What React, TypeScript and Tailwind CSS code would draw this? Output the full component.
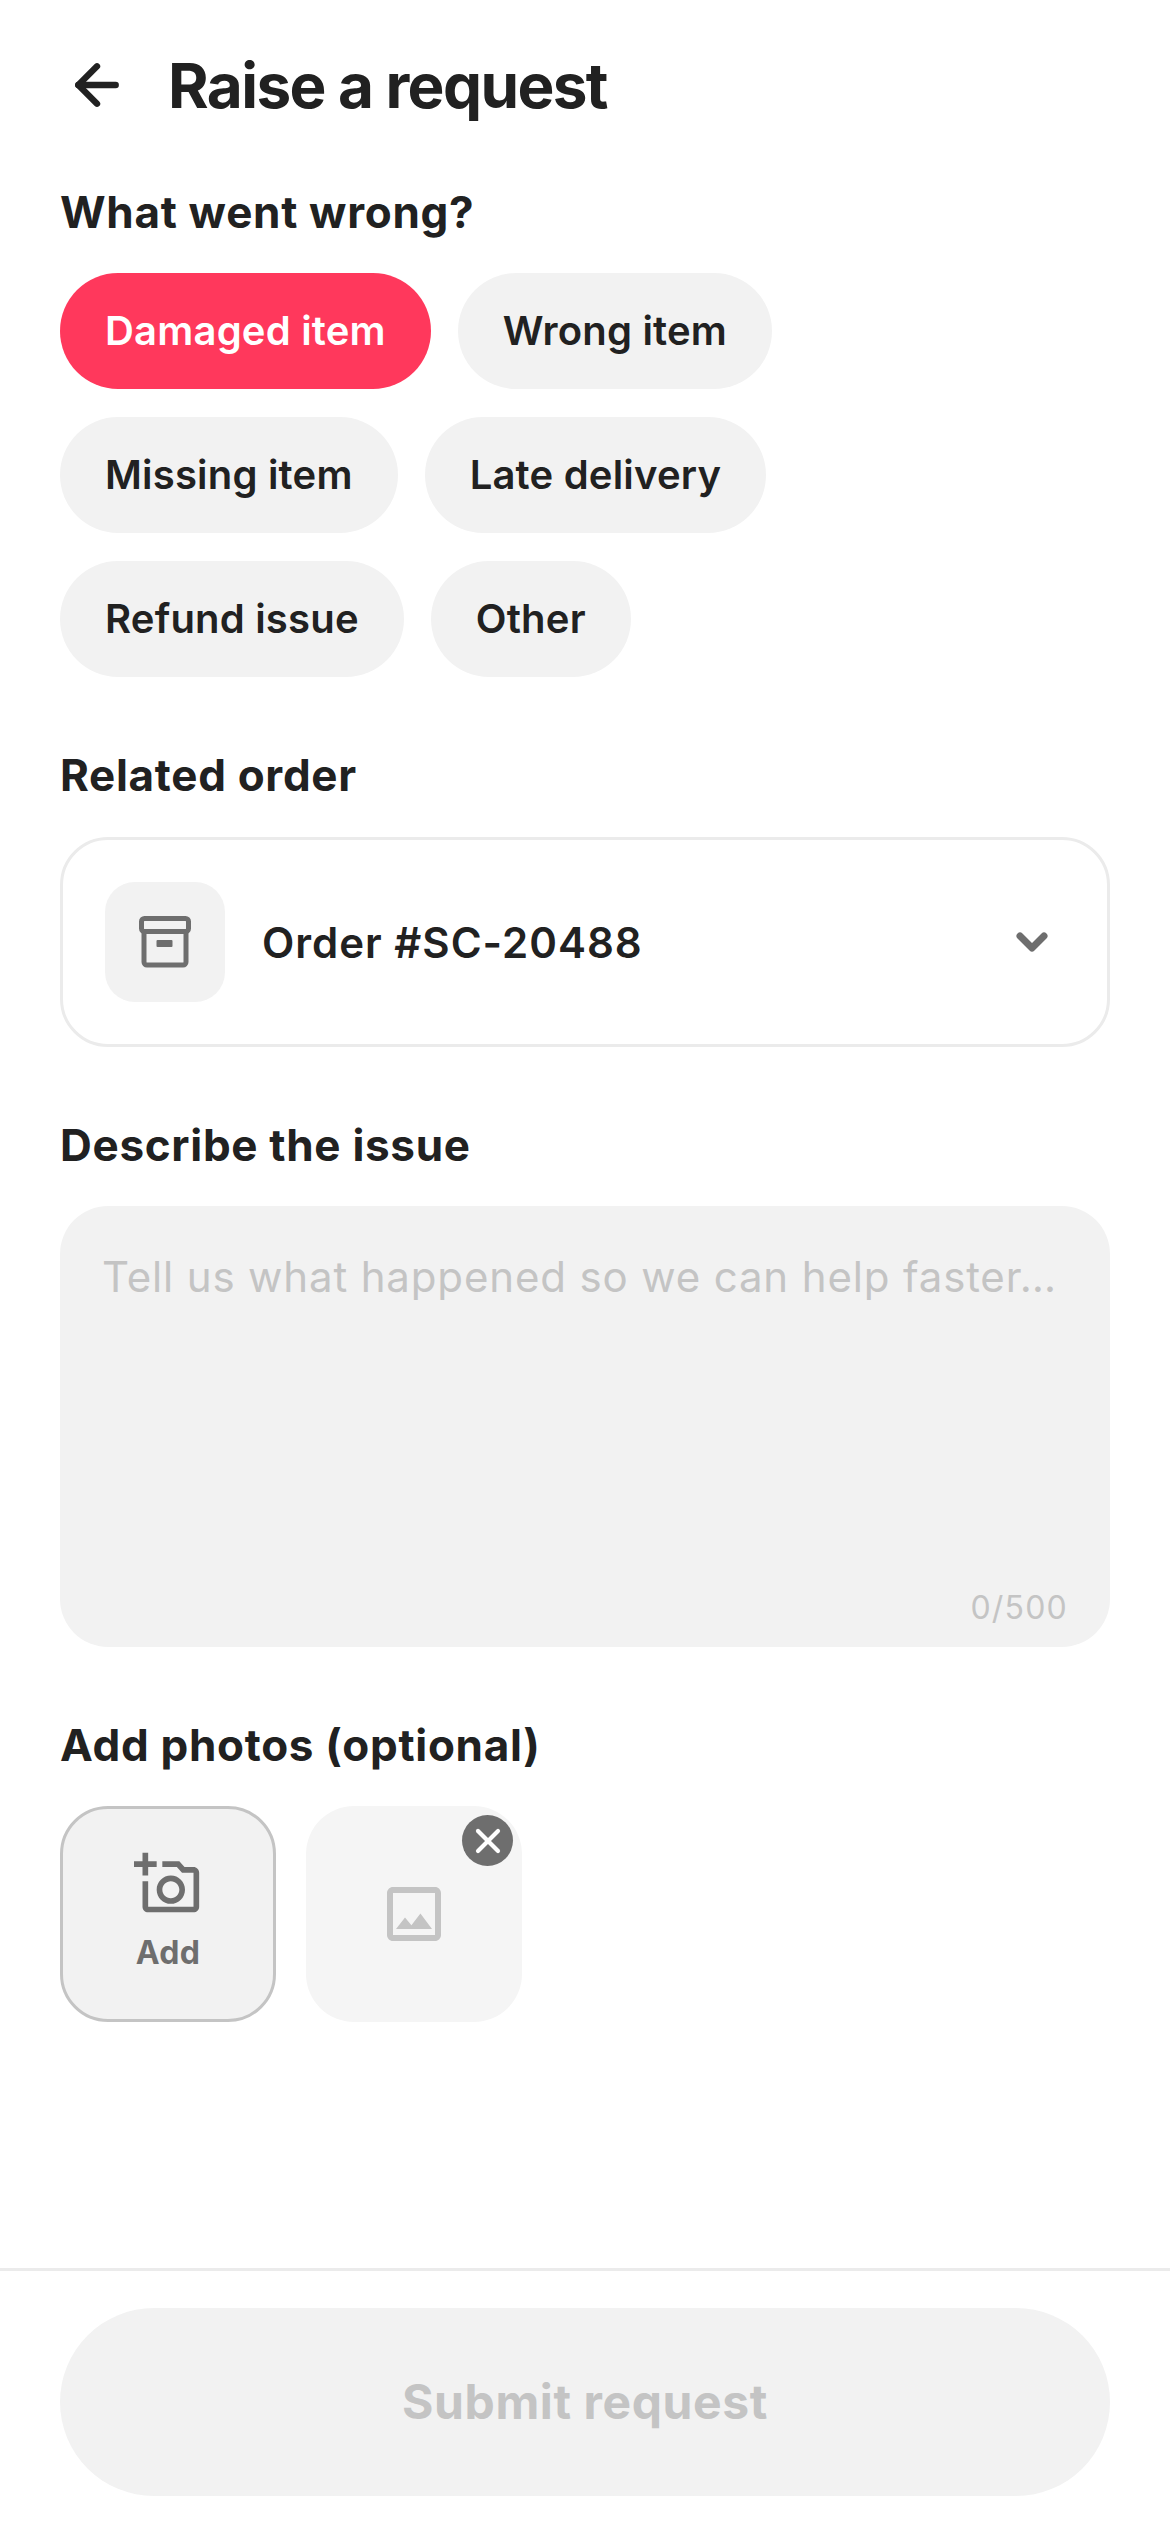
import { ArrowLeft, X } from "lucide-react";
import { MdOutlineAddAPhoto, MdOutlineImage } from "react-icons/md";

const rows = [
  ["Damaged item", "Wrong item"],
  ["Missing item", "Late delivery"],
  ["Refund issue", "Other"],
];

function Label({ children }: { children: string }) {
  return <div className="text-[44px] leading-[56px] font-bold text-[#212121] tracking-[0.7px]">{children}</div>;
}

function ArchiveIcon() {
  return (
    <svg width="52" height="52" viewBox="0 0 52 52" fill="none">
      <rect x="2.5" y="2.5" width="47" height="13" rx="3" stroke="#6e6e6e" strokeWidth="5" />
      <path d="M5 15v31a3 3 0 0 0 3 3h36a3 3 0 0 0 3-3V15" stroke="#6e6e6e" strokeWidth="5" />
      <rect x="17.5" y="24" width="16" height="7" rx="1" fill="#6e6e6e" />
    </svg>
  );
}

function ChevronIcon() {
  return (
    <svg width="32" height="20" viewBox="0 0 32 20" fill="none">
      <path d="M4 4l12 12L28 4" stroke="#6e6e6e" strokeWidth="7" strokeLinecap="round" strokeLinejoin="round" />
    </svg>
  );
}

export default function App() {
  return (
    <div className="h-[2532px] w-[1170px] bg-white flex flex-col font-['Inter',sans-serif] text-[#212121]">
      <div className="flex-1 px-[60px]">
        <div className="flex items-center h-[170px] pl-[5px] gap-[39px]">
          <ArrowLeft size={64} strokeWidth={2.4} className="shrink-0" />
          <div className="text-[62px] font-bold tracking-[-1.6px]">Raise a request</div>
        </div>

        <div className="mt-[14px]">
          <Label>What went wrong?</Label>
        </div>
        <div className="mt-[33px] flex flex-col gap-[28px]">
          {rows.map((row) => (
            <div key={row[0]} className="flex gap-[27px]">
              {row.map((chip) => (
                <div
                  key={chip}
                  className={
                    chip === "Damaged item"
                      ? "h-[116px] px-[45px] rounded-full bg-[#ff385c] text-white text-[40px] font-semibold tracking-[0.2px] flex items-center"
                      : "h-[116px] px-[45px] rounded-full bg-[#f2f2f2] text-[#212121] text-[40px] font-semibold tracking-[0.2px] flex items-center"
                  }
                >
                  {chip}
                </div>
              ))}
            </div>
          ))}
        </div>

        <div className="mt-[70px]">
          <Label>Related order</Label>
        </div>
        <div className="mt-[34px] h-[210px] rounded-[48px] border-[3px] border-[#ebebeb] flex items-center pl-[42px] pr-[59px]">
          <div className="w-[120px] h-[120px] rounded-[30px] bg-[#f2f2f2] flex items-center justify-center">
            <ArchiveIcon />
          </div>
          <div className="ml-[37px] flex-1 text-[42px] font-semibold tracking-[1px]">Order #SC-20488</div>
          <ChevronIcon />
        </div>

        <div className="mt-[70px]">
          <Label>Describe the issue</Label>
        </div>
        <div className="mt-[33px] h-[441px] rounded-[48px] bg-[#f2f2f2] relative pl-[42px] pr-[40px] pt-[43px]">
          <div className="text-[42px] leading-[56px] text-[#c4c4c4] whitespace-nowrap tracking-[0.85px]">
            Tell us what happened so we can help faster…
          </div>
          <div className="absolute right-[42px] bottom-[15px] text-[32px] text-[#c4c4c4] tracking-[1.2px]">0/500</div>
        </div>

        <div className="mt-[70px]">
          <Label>Add photos (optional)</Label>
        </div>
        <div className="mt-[33px] flex gap-[30px]">
          <div className="w-[216px] h-[216px] rounded-[48px] bg-[#f2f2f2] border-[3px] border-[#c4c4c4] flex flex-col items-center justify-center">
            <MdOutlineAddAPhoto size={68} className="text-[#6e6e6e] -mt-[2px]" />
            <div className="mt-[11px] text-[32px] font-bold text-[#6e6e6e] tracking-[0.3px]">Add</div>
          </div>
          <div className="w-[216px] h-[216px] rounded-[48px] bg-[#f5f5f5] relative flex items-center justify-center">
            <MdOutlineImage size={72} className="text-[#c4c4c4]" />
            <div className="absolute top-[9px] right-[9px] w-[51px] h-[51px] rounded-full bg-[#6e6e6e] flex items-center justify-center">
              <X size={40} strokeWidth={2.5} className="text-white" />
            </div>
          </div>
        </div>
      </div>

      <div className="border-t-[3px] border-[#ebebeb] px-[60px] pt-[37px] pb-[36px]">
        <div className="h-[188px] rounded-full bg-[#f2f2f2] flex items-center justify-center text-[48px] font-bold text-[#c4c4c4] tracking-[0.6px]">
          Submit request
        </div>
      </div>
    </div>
  );
}
